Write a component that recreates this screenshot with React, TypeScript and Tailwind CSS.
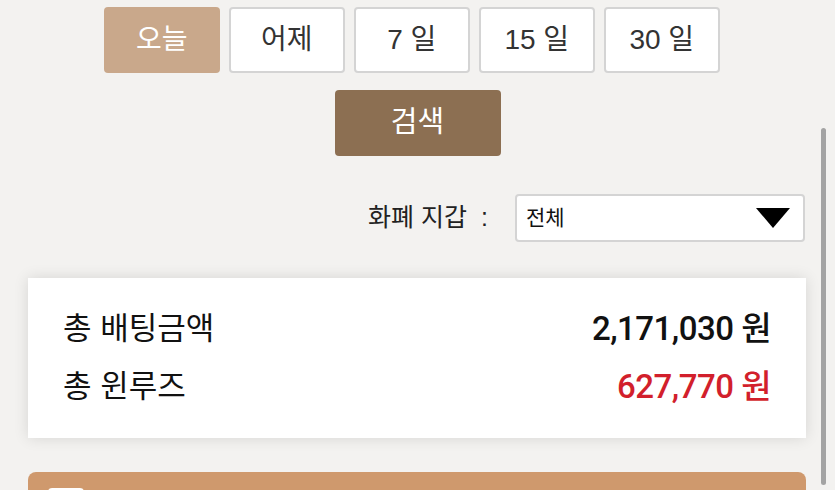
import React from "react";

export default function App() {
  const days = ["오늘", "어제", "7 일", "15 일", "30 일"];
  return (
    <div className="relative w-full h-[490px] overflow-hidden bg-[#f3f2f0] [font-family:'Liberation_Sans','Noto_Sans_CJK_KR',sans-serif]">
      <div className="flex gap-[9.5px] pt-[7px] pl-[104px]">
        {days.map((d, i) => (
          <button
            key={d}
            className={
              i === 0
                ? "w-[115.5px] h-[66px] rounded-[4px] bg-[#c9a88b] text-white text-[28px] flex items-center justify-center"
                : "w-[115.5px] h-[66px] rounded-[4px] bg-white border-2 border-[#d4d4d4] text-[#333] text-[28px] flex items-center justify-center"
            }
          >
            {d}
          </button>
        ))}
      </div>

      <div className="flex justify-center mt-[17px]">
        <button className="w-[166px] h-[66px] rounded-[4px] bg-[#8c6f52] text-white text-[29px] flex items-center justify-center">
          검색
        </button>
      </div>

      <div className="flex justify-end items-center mt-[38px] pr-[30px] gap-[27px]">
        <span className="text-[25px] text-[#222] flex items-center gap-[14px]">
          <span>화폐 지갑</span>
          <span>:</span>
        </span>
        <div className="w-[290px] h-[48px] bg-white border-2 border-[#d4d4d4] rounded-[4px] flex items-center justify-between pl-[9px] pr-[13px]">
          <span className="text-[21px] text-[#111]">전체</span>
          <svg width="34" height="20" viewBox="0 0 34 20">
            <polygon points="0,0 34,0 17,20" fill="#000" />
          </svg>
        </div>
      </div>

      <div className="mt-[36px] ml-[28px] mr-[29px] h-[160px] bg-white shadow-[0_0_14px_rgba(0,0,0,0.12)] flex flex-col justify-center gap-[20px] px-[35px] pb-[0px]">
        <div className="flex justify-between items-center h-[38px]">
          <span className="text-[31px] text-[#111]">총 배팅금액</span>
          <span className="text-[33px] font-medium text-[#111] tracking-[-0.5px] [font-family:'Roboto','Noto_Sans_CJK_KR',sans-serif]">
            2,171,030 원
          </span>
        </div>
        <div className="flex justify-between items-center h-[38px]">
          <span className="text-[31px] text-[#111]">총 윈루즈</span>
          <span className="text-[33px] font-medium text-[#d21f2c] tracking-[-0.5px] [font-family:'Roboto','Noto_Sans_CJK_KR',sans-serif]">
            627,770 원
          </span>
        </div>
      </div>

      <div className="mt-[34px] ml-[28px] mr-[29px] h-[40px] bg-[#cf996d] rounded-t-[8px] pt-[16px] pl-[20px]">
        <div className="w-[36px] h-[20px] bg-white rounded-t-[4px]" />
      </div>

      <div className="absolute left-[821px] top-[128px] w-[5px] h-[357px] rounded-full bg-[#a3a3a3]" />
    </div>
  );
}
